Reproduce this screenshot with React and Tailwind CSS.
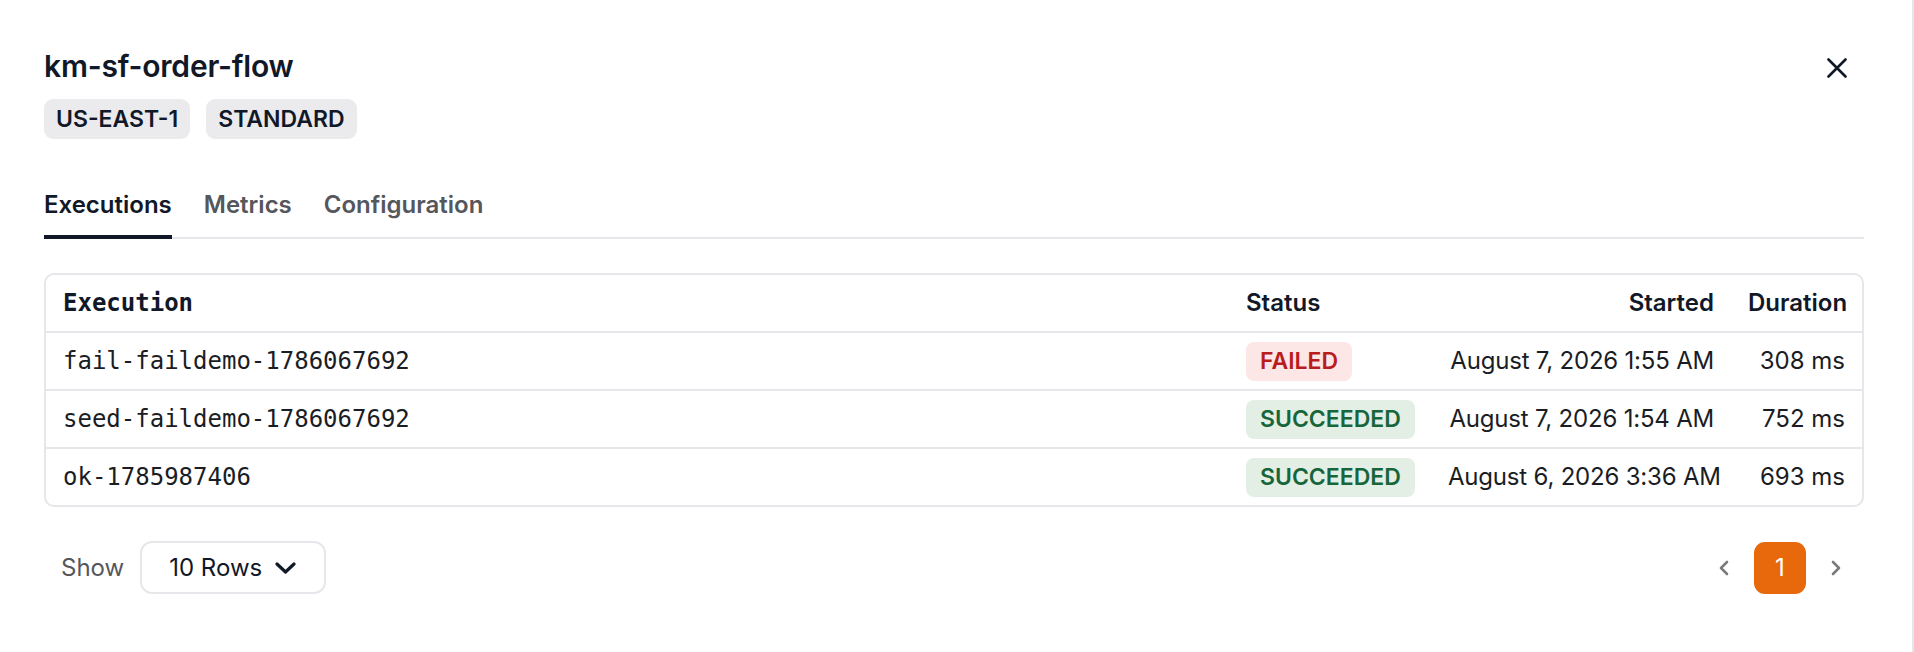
import { useState } from 'react';

const executions = [
  { id: 'fail-faildemo-1786067692', status: 'FAILED', started: 'August 7, 2026 1:55 AM', duration: '308 ms' },
  { id: 'seed-faildemo-1786067692', status: 'SUCCEEDED', started: 'August 7, 2026 1:54 AM', duration: '752 ms' },
  { id: 'ok-1785987406', status: 'SUCCEEDED', started: 'August 6, 2026 3:36 AM', duration: '693 ms' },
];

const tabs = ['Executions', 'Metrics', 'Configuration'];

const sans = { fontFamily: 'Inter, "Liberation Sans", sans-serif' };
const mono = { fontFamily: '"DejaVu Sans Mono", monospace' };

const StatusBadge = ({ status }) => {
  const styles =
    status === 'FAILED'
      ? 'bg-[#fde6e6] text-[#b91c1c]'
      : 'bg-[#e3efe5] text-[#17653a]';
  return (
    <span className={`inline-flex h-[39px] items-center rounded-[8px] px-[14px] text-[23px] font-semibold ${styles}`}>
      {status}
    </span>
  );
};

const CloseIcon = () => (
  <svg width="20" height="20" viewBox="0 0 20 20" fill="none" stroke="#111827" strokeWidth="2.6" strokeLinecap="round">
    <path d="M1.5 1.5l17 17M18.5 1.5l-17 17" />
  </svg>
);

const ChevronDown = () => (
  <svg width="21" height="12" viewBox="0 0 21 12" fill="none" stroke="#111827" strokeWidth="3.2" strokeLinecap="round" strokeLinejoin="round">
    <path d="M2 2l8.5 8 8.5-8" />
  </svg>
);

const ChevronSide = ({ dir }) => (
  <svg width="10" height="16" viewBox="0 0 10 16" fill="none" stroke="#7b7b7f" strokeWidth="2.6" strokeLinecap="round" strokeLinejoin="round">
    {dir === 'left' ? <path d="M8 2L2 8l6 6" /> : <path d="M2 2l6 6-6 6" />}
  </svg>
);

export default function App() {
  const [active, setActive] = useState('Executions');

  return (
    <div className="flex min-h-[652px] w-full bg-white text-[#111827]" style={sans}>
      <div className="flex-1 pl-[44px] pr-[48px] pt-[48px]">
        {/* header */}
        <div className="flex items-start justify-between">
          <div>
            <h1 className="text-[30px] font-semibold leading-[36px] tracking-[-0.2px]">km-sf-order-flow</h1>
            <div className="mt-[15px] flex gap-[16px]">
              <span className="inline-flex h-[40px] items-center rounded-[9px] bg-[#ebebed] px-[12px] text-[23px] font-semibold">
                US-EAST-1
              </span>
              <span className="inline-flex h-[40px] items-center rounded-[9px] bg-[#ebebed] px-[12px] text-[23px] font-semibold">
                STANDARD
              </span>
            </div>
          </div>
          <button className="mr-[17px] mt-[10px]">
            <CloseIcon />
          </button>
        </div>

        {/* tabs */}
        <div className="mt-[50px] flex gap-[32px] border-b-2 border-[#e5e7eb]">
          {tabs.map((t) => (
            <button
              key={t}
              onClick={() => setActive(t)}
              className={`-mb-[2px] border-b-4 pb-[14px] text-[24px] font-semibold leading-[32px] ${
                active === t ? 'border-[#111827] text-[#111827]' : 'border-transparent text-[#55575c]'
              }`}
            >
              {t}
            </button>
          ))}
        </div>

        {/* executions table */}
        <div className="mt-[34px] overflow-hidden rounded-[10px] border-2 border-[#e6e7ea]">
          <div className="grid h-[56px] grid-cols-[1fr_202px_300px_131px] items-center text-[24px] font-semibold">
            <div className="px-[17px] font-bold" style={mono}>
              Execution
            </div>
            <div className="px-[17px]">Status</div>
            <div className="px-[17px] text-right">Started</div>
            <div className="px-[17px] text-right">Duration</div>
          </div>
          {executions.map((e) => (
            <div
              key={e.id}
              className="grid h-[58px] grid-cols-[1fr_202px_300px_131px] items-center border-t-2 border-[#e6e7ea] text-[24px] text-[#1a1d24]"
            >
              <div className="px-[17px]" style={mono}>
                {e.id}
              </div>
              <div className="px-[17px]">
                <StatusBadge status={e.status} />
              </div>
              <div className="whitespace-nowrap px-[17px] text-right tracking-[-0.2px]">{e.started}</div>
              <div className="px-[17px] text-right">{e.duration}</div>
            </div>
          ))}
        </div>

        {/* footer */}
        <div className="mt-[34px] flex items-center justify-between pl-[17px]">
          <div className="flex items-center gap-[16px]">
            <span className="text-[24px] text-[#55575c]">Show</span>
            <button className="flex h-[53px] w-[186px] items-center justify-between rounded-[12px] border-2 border-[#e6e7ea] pl-[27px] pr-[28px] text-[24px]">
              <span>10 Rows</span>
              <ChevronDown />
            </button>
          </div>
          <div className="flex items-center gap-[4px] pr-[2px]">
            <button className="flex h-[52px] w-[52px] items-center justify-center">
              <ChevronSide dir="left" />
            </button>
            <button className="flex h-[52px] w-[52px] items-center justify-center rounded-[11px] bg-[#e8690c] text-[24px] text-white">
              1
            </button>
            <button className="flex h-[52px] w-[52px] items-center justify-center">
              <ChevronSide dir="right" />
            </button>
          </div>
        </div>
      </div>
      <div className="w-[2px] bg-[#e6e7ea]" />
    </div>
  );
}
